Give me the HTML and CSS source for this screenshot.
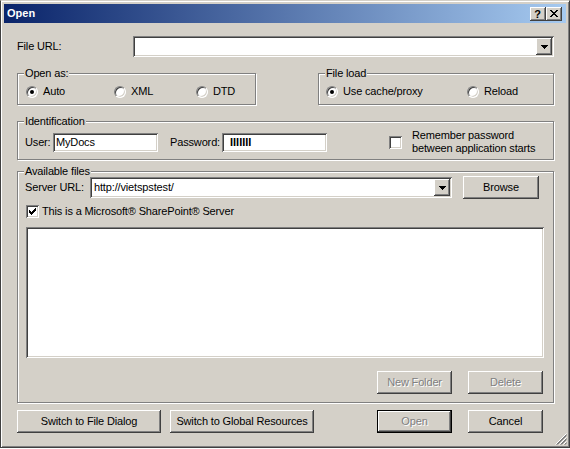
FILE: index.html
```html
<!DOCTYPE html>
<html>
<head>
<meta charset="utf-8">
<title>Open</title>
<link rel="stylesheet" href="styles.css">
</head>
<body>
<div class="window">
  <div class="titlebar">
    <span class="title">Open</span>
    <div class="caption-btns">
      <span class="cbtn raised help">?</span>
      <span class="cbtn raised close">
        <svg width="8" height="7" viewBox="0 0 8 7"><path d="M0 0h2v1H0zM6 0h2v1H6zM1 1h2v1H1zM5 1h2v1H5zM2 2h4v1H2zM3 3h2v1H3zM2 4h4v1H2zM1 5h2v1H1zM5 5h2v1H5zM0 6h2v1H0zM6 6h2v1H6z" fill="#000"/></svg>
      </span>
    </div>
  </div>

  <div class="content">
    <div class="url-row">
      <span class="lbl lbl-url">File URL:</span>
      <div class="combo sunken combo-url">
        <span class="combo-text"></span>
        <span class="dd-btn raised"><svg width="7" height="4" viewBox="0 0 7 4"><path d="M0 0h7v1H0zM1 1h5v1H1zM2 2h3v1H2zM3 3h1v1H3z" fill="#000"/></svg></span>
      </div>
    </div>

    <div class="groups-row">
      <div class="group g-openas">
        <div class="legend">Open as:</div>
        <div class="radios r-openas">
          <span class="ritem"><span class="radio on"></span>Auto</span>
          <span class="ritem"><span class="radio"></span>XML</span>
          <span class="ritem"><span class="radio"></span>DTD</span>
        </div>
      </div>
      <div class="group g-fileload">
        <div class="legend">File load</div>
        <div class="radios r-fileload">
          <span class="ritem"><span class="radio on"></span>Use cache/proxy</span>
          <span class="ritem"><span class="radio"></span>Reload</span>
        </div>
      </div>
    </div>

    <div class="group g-ident">
      <div class="legend">Identification</div>
      <div class="ident-row">
        <span class="lbl lbl-user">User:</span>
        <span class="field sunken">MyDocs</span>
        <span class="lbl lbl-pass">Password:</span>
        <span class="field sunken pass"><span class="pass-dots">IIIIIII</span></span>
        <span class="check sunken remember"></span>
        <span class="remember-text">Remember password<br>between application starts</span>
      </div>
    </div>

    <div class="group g-files">
      <div class="legend">Available files</div>
      <div class="server-row">
        <span class="lbl lbl-server">Server URL:</span>
        <div class="combo sunken combo-server">
          <span class="combo-text">http://vietspstest/</span>
          <span class="dd-btn raised"><svg width="7" height="4" viewBox="0 0 7 4"><path d="M0 0h7v1H0zM1 1h5v1H1zM2 2h3v1H2zM3 3h1v1H3z" fill="#000"/></svg></span>
        </div>
        <span class="btn raised btn-browse">Browse</span>
      </div>
      <div class="sp-row">
        <span class="check sunken">
          <svg width="13" height="13" viewBox="0 0 13 13"><path d="M9 3h1v1H9zM8 4h2v1H8zM3 5h1v1H3zM7 5h3v1H7zM3 6h2v1H3zM6 6h3v1H6zM3 7h5v1H3zM4 8h3v1H4zM5 9h1v1H5z" fill="#000"/></svg>
        </span>
        <span class="sp-text">This is a Microsoft® SharePoint® Server</span>
      </div>
      <div class="listbox sunken"></div>
      <div class="folder-row">
        <span class="btn raised disabled">New Folder</span>
        <span class="btn raised disabled">Delete</span>
      </div>
    </div>

    <div class="bottom-row">
      <div class="btn-group left">
        <span class="btn raised wide">Switch to File Dialog</span>
        <span class="btn raised wide">Switch to Global Resources</span>
      </div>
      <div class="btn-group right">
        <span class="btn raised default disabled">Open</span>
        <span class="btn raised">Cancel</span>
      </div>
    </div>
  </div>

  <svg class="grip" width="12" height="12" viewBox="0 0 12 12">
    <g stroke-width="1">
      <line x1="11.5" y1="0.5" x2="0.5" y2="11.5" stroke="#fff"/>
      <line x1="11.5" y1="1.5" x2="1.5" y2="11.5" stroke="#808080"/>
      <line x1="11.5" y1="2.5" x2="2.5" y2="11.5" stroke="#808080"/>
      <line x1="11.5" y1="4.5" x2="4.5" y2="11.5" stroke="#fff"/>
      <line x1="11.5" y1="5.5" x2="5.5" y2="11.5" stroke="#808080"/>
      <line x1="11.5" y1="6.5" x2="6.5" y2="11.5" stroke="#808080"/>
      <line x1="11.5" y1="8.5" x2="8.5" y2="11.5" stroke="#fff"/>
      <line x1="11.5" y1="9.5" x2="9.5" y2="11.5" stroke="#808080"/>
      <line x1="11.5" y1="10.5" x2="10.5" y2="11.5" stroke="#808080"/>
    </g>
  </svg>
</div>
</body>
</html>
```
FILE: styles.css
```css
html, body {
  margin: 0;
  padding: 0;
  background: #ffffff;
}

body {
  font-family: "Liberation Sans", Arial, sans-serif;
  font-size: 11px;
  letter-spacing: -0.15px;
  color: #000;
}

.window {
  position: relative;
  width: 570px;
  height: 448px;
  box-sizing: border-box;
  background: #d4d0c8;
  border: 1px solid;
  border-color: #d4d0c8 #404040 #404040 #404040;
  box-shadow: inset 1px 1px #fff, inset -1px -1px #808080;
  padding: 3px;
}

/* ---------- title bar ---------- */
.titlebar {
  height: 19px;
  display: flex;
  align-items: center;
  justify-content: space-between;
  background: linear-gradient(to right, #0a246a, #a6caf0);
  padding: 0 4px 0 3px;
}

.title {
  color: #fff;
  font-weight: bold;
  font-size: 11px;
  letter-spacing: 0;
  line-height: 19px;
}

.caption-btns {
  display: flex;
}

.cbtn {
  width: 16px;
  height: 14px;
  box-sizing: border-box;
  background: #d4d0c8;
  display: flex;
  align-items: center;
  justify-content: center;
}

.cbtn.help {
  font-weight: bold;
  font-size: 11px;
  line-height: 14px;
  padding-right: 1px;
}

/* ---------- bevels ---------- */
.raised {
  background: #d4d0c8;
  box-shadow: inset -1px -1px #404040, inset 1px 1px #fff, inset -2px -2px #808080, inset 2px 2px #d4d0c8;
}

.sunken {
  background: #fff;
  box-shadow: inset 1px 1px #808080, inset -1px -1px #fff, inset 2px 2px #404040, inset -2px -2px #d4d0c8;
}

/* ---------- content ---------- */
.content {
  padding: 0 12px 0 13px;
}

.lbl {
  flex: none;
  line-height: 13px;
}

.url-row {
  margin-top: 13px;
  display: flex;
  align-items: center;
  height: 21px;
}

.lbl-url {
  width: 116px;
}

.combo {
  height: 21px;
  box-sizing: border-box;
  padding: 2px;
  display: flex;
}

.combo-url {
  flex: 1;
}

.combo-text {
  flex: 1;
  line-height: 17px;
  padding-left: 2px;
  white-space: nowrap;
  overflow: hidden;
}

.dd-btn {
  width: 16px;
  height: 17px;
  flex: none;
  display: flex;
  align-items: center;
  justify-content: center;
}

.dd-btn svg {
  display: block;
  margin-left: 1px;
}

/* ---------- groups ---------- */
.group {
  box-sizing: border-box;
  border: 1px solid #808080;
  box-shadow: 1px 1px 0 #fff, inset 1px 1px 0 #fff;
}

.legend {
  width: fit-content;
  margin: -7px 0 0 6px;
  padding: 0 1px;
  background: #d4d0c8;
  line-height: 13px;
  white-space: nowrap;
}

.groups-row {
  margin-top: 16px;
  display: flex;
  justify-content: space-between;
}

.g-openas {
  width: 239px;
  height: 32px;
}

.g-fileload {
  width: 236px;
  height: 32px;
}

.radios {
  margin-top: 5px;
  height: 13px;
  display: grid;
  align-items: center;
}

.r-openas {
  padding-left: 8px;
  grid-template-columns: 88px 82px auto;
}

.r-fileload {
  padding-left: 7px;
  grid-template-columns: 141px auto;
}

.ritem {
  display: flex;
  align-items: center;
  line-height: 13px;
  white-space: nowrap;
}

.radio {
  position: relative;
  width: 12px;
  height: 12px;
  box-sizing: border-box;
  flex: none;
  border-radius: 50%;
  background: #fff;
  border: 1px solid;
  border-color: #808080 #fff #fff #808080;
  box-shadow: inset 1px 1px #404040, inset -1px -1px #d4d0c8;
  margin-right: 5px;
}

.radio.on::after {
  content: "";
  position: absolute;
  left: 3px;
  top: 3px;
  width: 4px;
  height: 4px;
  border-radius: 50%;
  background: #000;
}

/* identification */
.g-ident {
  margin-top: 16px;
  height: 39px;
}

.ident-row {
  margin-top: 1px;
  height: 26px;
  display: flex;
  align-items: center;
  padding-left: 7px;
}

.lbl-user {
  width: 28px;
}

.lbl-pass {
  width: 52px;
  margin-left: 12px;
}

.field {
  width: 105px;
  height: 19px;
  box-sizing: border-box;
  padding: 0 3px;
  line-height: 19px;
  flex: none;
  white-space: nowrap;
}

.pass-dots {
  font-weight: bold;
  letter-spacing: 0;
  padding-left: 5px;
}

.check {
  width: 13px;
  height: 13px;
  flex: none;
  display: block;
}

.check svg {
  display: block;
}

.remember {
  margin-left: 62px;
}

.remember-text {
  margin-left: 10px;
  line-height: 13px;
  white-space: nowrap;
}

/* available files */
.g-files {
  margin-top: 11px;
  height: 232px;
}

.server-row {
  margin-top: -2px;
  height: 23px;
  display: flex;
  align-items: center;
  padding-left: 7px;
}

.lbl-server {
  width: 65px;
}

.combo-server {
  width: 362px;
  flex: none;
}

.btn {
  height: 23px;
  box-sizing: border-box;
  display: flex;
  align-items: center;
  justify-content: center;
  line-height: 13px;
  white-space: nowrap;
  width: 75px;
  flex: none;
}

.btn-browse {
  width: 76px;
  margin-left: 11px;
}

.btn.disabled {
  color: #808080;
  text-shadow: 1px 1px 0 #fff;
}

.btn.default {
  border: 1px solid #000;
}

.sp-row {
  margin-top: 6px;
  height: 13px;
  display: flex;
  align-items: center;
  padding-left: 8px;
}

.sp-text {
  margin-left: 3px;
  line-height: 13px;
  white-space: nowrap;
}

.listbox {
  margin: 9px 0 0 8px;
  width: 518px;
  height: 131px;
}

.folder-row {
  margin-top: 13px;
  display: flex;
  justify-content: flex-end;
  gap: 16px;
  padding-right: 10px;
}

/* bottom row */
.bottom-row {
  margin-top: 7px;
  display: flex;
  justify-content: space-between;
  padding-right: 11px;
}

.btn-group {
  display: flex;
}

.btn-group.left {
  gap: 9px;
}

.btn-group.right {
  gap: 16px;
}

.btn.wide {
  width: 144px;
}

.grip {
  position: absolute;
  right: 2px;
  bottom: 2px;
  display: block;
}
```
